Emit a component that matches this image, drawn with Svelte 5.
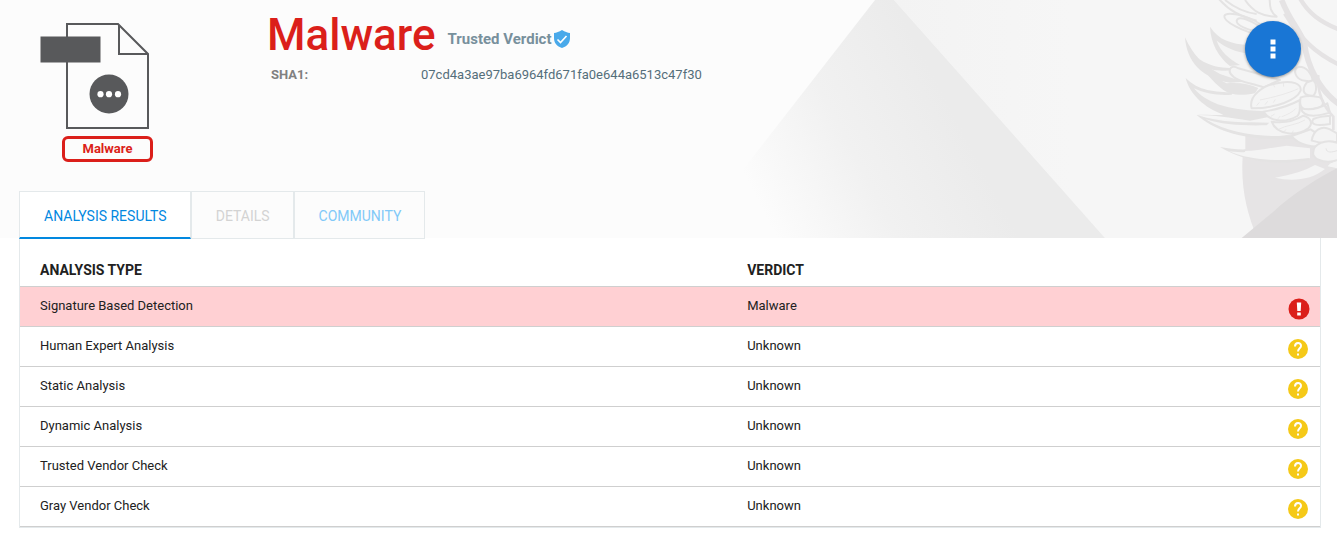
<script>
  const tabs = [
    { label: 'ANALYSIS RESULTS', state: 'active' },
    { label: 'DETAILS', state: 'disabled' },
    { label: 'COMMUNITY', state: 'idle' }
  ];
  const rows = [
    { type: 'Signature Based Detection', verdict: 'Malware' },
    { type: 'Human Expert Analysis', verdict: 'Unknown' },
    { type: 'Static Analysis', verdict: 'Unknown' },
    { type: 'Dynamic Analysis', verdict: 'Unknown' },
    { type: 'Trusted Vendor Check', verdict: 'Unknown' },
    { type: 'Gray Vendor Check', verdict: 'Unknown' }
  ];
</script>

<header class="hero">
  <svg class="backdrop" width="657" height="238" viewBox="680 0 657 238" aria-hidden="true">
    <defs>
      <linearGradient id="facet" gradientUnits="userSpaceOnUse" x1="770" y1="225" x2="960" y2="125">
        <stop offset="0" stop-color="#fcfcfc" />
        <stop offset="0.5" stop-color="#f1f1f1" />
        <stop offset="1" stop-color="#ebebeb" />
      </linearGradient>
      <linearGradient id="plane" x1="0" x2="1" y1="0" y2="0">
        <stop offset="0" stop-color="#f3f3f3" />
        <stop offset="0.4" stop-color="#f6f6f6" />
        <stop offset="1" stop-color="#f6f6f6" />
      </linearGradient>
    </defs>
    <path d="M894 0H1337V238H1105Z" fill="url(#plane)" />
    <path d="M875 0H894L1105 238H690Z" fill="url(#facet)" />
    <!-- wing drawn at three units per pixel -->
    <g transform="translate(1170 0) scale(.33333)">
      <path d="M226 405L380 400L501 470V714H262C230 640 212 560 218 470L226 448Z" fill="#e6e4e5" />
      <path d="M501 505C450 530 370 580 310 635L215 714H501Z" fill="#dddbdc" />
      <g fill="#f4f4f4">
        <path d="M122 82C145 130 180 150 240 160L300 225L240 240C170 200 135 150 122 82Z" />
        <path d="M46 115C65 170 110 205 180 205L250 265L170 245C100 240 55 180 46 115Z" />
        <path d="M48 236C90 275 150 285 250 285L300 340C200 350 90 325 48 236Z" />
        <path d="M82 346C150 365 250 360 300 355L380 400C270 425 150 405 82 346Z" />
        <path d="M152 443C230 465 280 445 350 437L420 445V475C320 500 220 480 152 443Z" />
        <path d="M315 533C365 525 410 510 435 495L465 507C425 540 365 545 315 533Z" />
      </g>
      <g fill="#e4e3e3">
        <path d="M120 80C145 120 185 132 235 135L240 160C195 158 165 140 140 122C152 155 175 175 210 195L180 198C145 170 122 130 120 80Z" />
        <path d="M45 112C70 168 100 195 150 222L220 245L180 248C95 235 50 185 45 112Z" />
        <path d="M88 178C130 205 165 205 205 203L190 211C160 214 125 212 103 200C125 228 150 238 170 250C205 247 235 250 265 264L255 280C205 290 180 282 160 270C125 242 100 215 88 178Z" />
        <path d="M47 234C85 273 135 276 190 277L185 284C145 287 105 281 72 265C110 310 170 325 235 331L285 334L300 350L240 362C175 352 135 346 82 345C155 370 225 366 298 368L290 376C220 378 155 374 107 358C165 394 240 407 310 408H375V416C240 424 145 400 80 345C115 343 145 347 160 344C105 324 60 285 47 234Z" />
        <path d="M150 441C180 445 200 449 228 448L225 456C210 458 190 455 176 453C245 483 330 485 418 474V481C310 500 215 481 150 441Z" />
      </g>
      <g fill="#f4f4f4" stroke="#e4e3e3" stroke-width="6" stroke-linejoin="round">
        <path d="M145 -5C180 35 210 48 260 62M165 0C190 20 225 38 260 42M225 0C250 35 275 50 320 50C300 35 300 20 299 0" fill="none" />
        <path d="M270 105C220 95 160 65 163 48C168 35 225 42 270 72M270 80C245 64 205 43 200 62C198 78 235 90 280 100" fill="none" />
        <path d="M205 205C180 190 170 215 190 230C210 248 250 250 280 262L330 240Z" />
        <path d="M390 300C350 322 310 330 280 335C300 365 345 370 382 348C396 335 386 310 390 300Z" />
        <path d="M245 325C235 290 275 255 330 248C365 242 395 250 392 272C380 300 320 325 245 325Z" />
        <path d="M365 408C385 435 430 445 470 436L455 410L422 388Z" />
        <path d="M305 365C320 405 380 410 415 385C430 370 423 353 400 347C370 365 340 370 305 365Z" />
        <path d="M270 300C310 292 355 280 385 266M325 388C350 375 380 375 405 360M335 350C350 345 370 335 378 325M260 317L268 307M285 314L293 304M310 308L316 298M310 253L314 262M340 249L341 260M340 398L348 388M365 402L370 392M303 349L314 342M323 357L331 348" fill="none" stroke-width="2" />
        <path d="M388 200C365 205 375 240 405 242L430 245C425 220 410 200 388 200Z" />
        <path d="M410 248C390 275 405 288 430 287C442 275 440 250 430 240Z" />
        <path d="M392 292C385 325 400 335 440 325C470 320 460 290 440 290Q415 285 392 292Z" />
        <path d="M392 325C400 350 430 353 480 338L472 310C445 328 415 330 392 325Z" />
        <path d="M430 357C420 372 435 380 480 372V347C462 348 445 350 430 357Z" />
        <path d="M425 422C430 390 455 375 480 388L501 400V425C475 432 450 430 425 422Z" />
        <path d="M430 465C425 430 470 415 505 430V480C475 490 440 485 430 465Z" />
        <path d="M468 445C470 460 485 457 501 452M471 500C480 485 490 487 505 480V507Z" stroke-width="3" />
      </g>
      <g fill="none" stroke="#e5e3e4">
        <path d="M335 0C360 65 390 90 403 130C412 195 445 270 510 315" stroke-width="17" />
        <path d="M345 40C390 115 435 160 510 195M390 -5C415 40 450 65 510 90" stroke-width="13" />
        <path d="M445 225C440 275 460 320 490 350V390" stroke-width="8" />
      </g>
    </g>
  </svg>

  <div class="summary">
    <div class="file">
      <svg width="112" height="110" viewBox="0 0 112 110" role="img" aria-label="File">
        <g fill="none" stroke="#58595b" stroke-width="2">
          <path d="M27 3H78L108 33V107H27Z" />
          <path d="M79 4V33H108" />
        </g>
        <path d="M.5 15.500H60.500V41.500H.5Z" fill="#58595b" />
        <circle cx="69" cy="73" r="19.500" fill="#58595b" />
        <g fill="#fff">
          <circle cx="60.500" cy="73.200" r="3.100" />
          <circle cx="69" cy="73.200" r="3.100" />
          <circle cx="78" cy="73.200" r="3.100" />
        </g>
      </svg>
      <span class="badge">Malware</span>
    </div>

    <div class="info">
      <div class="headline">
        <h1>Malware</h1>
        <span class="trusted">
          Trusted Verdict
          <svg width="18" height="20" viewBox="0 0 18 20" aria-hidden="true">
            <path d="M9 1C12 3 14.500 3.600 17 4V9C17 14 14 17.500 9 19C4 17.500 1 14 1 9V4C3.500 3.600 6 3 9 1Z" fill="#49a9ea" />
            <path d="M4.500 10.500L7.500 13.500L13.500 7" fill="none" stroke="#fff" stroke-width="1.600" />
          </svg>
        </span>
      </div>
      <dl>
        <dt>SHA1:</dt>
        <dd>07cd4a3ae97ba6964fd671fa0e644a6513c47f30</dd>
      </dl>
    </div>

    <button class="menu" aria-label="More actions">
      <svg width="6" height="20" viewBox="0 0 6 20" aria-hidden="true">
        <path d="M.5.500h5v5h-5zM.5 7.500h5v5h-5zM.5 14.500h5v5h-5z" fill="#fff" />
      </svg>
    </button>
  </div>

  <nav>
    {#each tabs as tab}
      <button class="tab {tab.state}" disabled={tab.state === 'disabled'}>{tab.label}</button>
    {/each}
  </nav>
</header>

<main>
  <table>
    <thead>
      <tr>
        <th class="type">ANALYSIS TYPE</th>
        <th class="verdict">VERDICT</th>
        <td></td>
      </tr>
    </thead>
    <tbody>
      {#each rows as row}
        <tr class:malware={row.verdict === 'Malware'}>
          <td>{row.type}</td>
          <td>{row.verdict}</td>
          <td class="status">
            {#if row.verdict === 'Malware'}
              <svg width="22" height="22" viewBox="0 0 22 22" aria-hidden="true">
                <circle cx="11" cy="11" r="10.500" fill="#db1f1a" />
                <path d="M8.800 4.500h4.400l-.5 8.500h-3.400zM9.200 14.500h3.600v3h-3.600z" fill="#fff" />
              </svg>
            {:else}
              <svg class="unknown" width="20" height="20" viewBox="0 0 20 20" aria-hidden="true">
                <circle cx="10" cy="10" r="10" fill="#f5c918" />
                <path d="M7 7.500C7 2.800 13.200 3 13 7C12.900 9.400 10 9.300 10 12.500" fill="none" stroke="#fff" stroke-width="2" />
                <path d="M9 14.500h2v2H9z" fill="#fff" />
              </svg>
            {/if}
          </td>
        </tr>
      {/each}
    </tbody>
  </table>
</main>

<style>
  :global(body) {
    margin: 0;
    background: #fff;
    color: #212121;
    font-family: Roboto, sans-serif;
    font-size: 13px;
    line-height: 20px;
  }
  button {
    font: inherit;
  }
  svg {
    display: block;
  }
  .hero {
    position: relative;
    background: #fcfcfc;
    height: 238px;
    display: flex;
    flex-direction: column;
    justify-content: space-between;
  }
  .backdrop {
    position: absolute;
    right: 0;
    top: 0;
  }
  .summary {
    position: relative;
    display: flex;
    align-items: flex-start;
    padding: 21px 36px 0 40px;
  }
  .file {
    width: 227px;
  }
  .badge {
    display: block;
    box-sizing: border-box;
    width: 91px;
    margin: 5px 0 0 22px;
    border: 3px solid #db1f1a;
    border-radius: 6px;
    color: #db1f1a;
    font-weight: 700;
    text-align: center;
  }
  .info {
    flex: 1;
  }
  .headline {
    display: flex;
    align-items: center;
    gap: 12px;
    height: 28px;
  }
  h1 {
    margin: 0;
    color: #db1f1a;
    font-size: 44px;
    font-weight: 500;
    line-height: 28px;
  }
  .trusted {
    display: flex;
    align-items: center;
    gap: 1px;
    padding-top: 8px;
    color: #78909c;
    font-size: 15px;
    font-weight: 700;
  }
  dl {
    display: flex;
    margin: 16px 0 0 4px;
  }
  dt {
    width: 150px;
    color: #808080;
    font-weight: 700;
  }
  dd {
    margin: 0;
    color: #546e7a;
  }
  .menu {
    display: grid;
    place-items: center;
    width: 56px;
    height: 56px;
    padding: 0;
    border: 0;
    border-radius: 50%;
    background: #1976d5;
    box-shadow: 0 1px 3px rgba(0, 0, 0, 0.4);
  }
  nav {
    position: relative;
    display: flex;
    margin: 0 0 -1px 19px;
  }
  .tab {
    height: 48px;
    padding: 2px 23px 0 24px;
    border: 1px solid #e4e9eb;
    background: #fcfcfc;
    font-size: 14px;
  }
  .active {
    border-bottom: 2px solid #0288df;
    background: #fff;
    color: #0288df;
  }
  .disabled {
    color: #d3d3d3;
  }
  .idle {
    color: #81c9f8;
  }
  main {
    margin: 0 16px 0 19px;
    border: 1px solid #e4e9eb;
    border-top: 0;
  }
  table {
    width: 100%;
    border-collapse: collapse;
    table-layout: fixed;
  }
  .type {
    width: 54.4%;
  }
  .verdict {
    width: 25%;
  }
  th,
  td {
    box-sizing: border-box;
    height: 40px;
    padding: 0 20px;
    border-bottom: 1px solid #cfcfcf;
    text-align: left;
  }
  th {
    height: 48px;
    padding-top: 17px;
    font-size: 14px;
    font-weight: 700;
  }
  .malware {
    background: #ffd0d3;
  }
  .status {
    padding: 6px 10px 0 0;
  }
  .status svg {
    margin-left: auto;
  }
  .status .unknown {
    margin-right: 2px;
  }
</style>
